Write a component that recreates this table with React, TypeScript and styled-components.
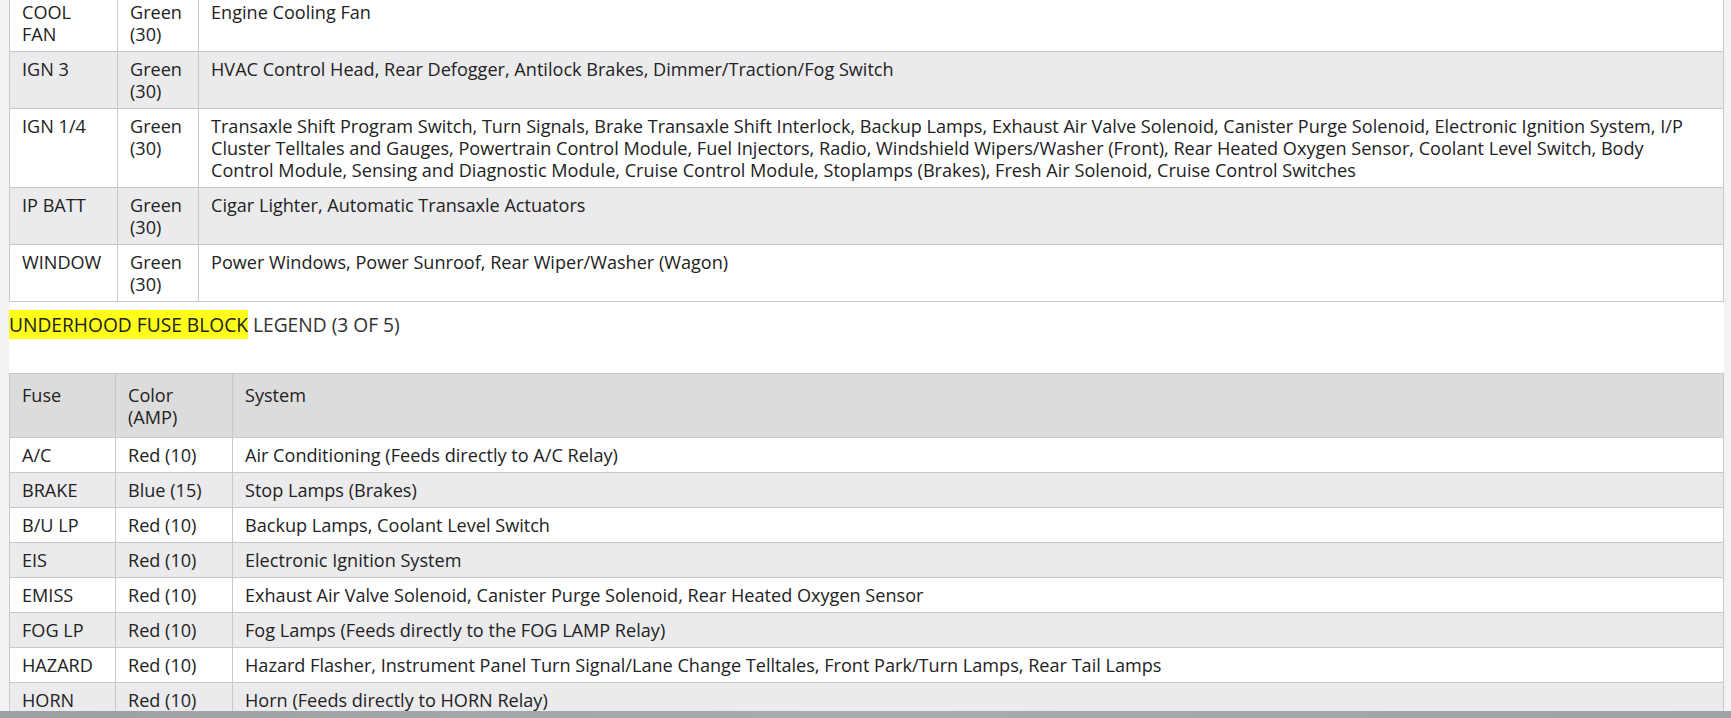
import styled, { createGlobalStyle } from "styled-components";

const GlobalStyle = createGlobalStyle`
  html, body {
    margin: 0;
    padding: 0;
    overflow: hidden;
  }
  body {
    background: #f3f3f5;
    font-family: "Open Sans", "Noto Sans", sans-serif;
    color: #222;
  }
`;

type Row = { fuse: string; color: string; system: string };

const block2: Row[] = [
  { fuse: "COOL FAN", color: "Green (30)", system: "Engine Cooling Fan" },
  {
    fuse: "IGN 3",
    color: "Green (30)",
    system: "HVAC Control Head, Rear Defogger, Antilock Brakes, Dimmer/Traction/Fog Switch",
  },
  {
    fuse: "IGN 1/4",
    color: "Green (30)",
    system:
      "Transaxle Shift Program Switch, Turn Signals, Brake Transaxle Shift Interlock, Backup Lamps, Exhaust Air Valve Solenoid, Canister Purge Solenoid, Electronic Ignition System, I/P Cluster Telltales and Gauges, Powertrain Control Module, Fuel Injectors, Radio, Windshield Wipers/Washer (Front), Rear Heated Oxygen Sensor, Coolant Level Switch, Body Control Module, Sensing and Diagnostic Module, Cruise Control Module, Stoplamps (Brakes), Fresh Air Solenoid, Cruise Control Switches",
  },
  { fuse: "IP BATT", color: "Green (30)", system: "Cigar Lighter, Automatic Transaxle Actuators" },
  {
    fuse: "WINDOW",
    color: "Green (30)",
    system: "Power Windows, Power Sunroof, Rear Wiper/Washer (Wagon)",
  },
];

const block3: Row[] = [
  { fuse: "A/C", color: "Red (10)", system: "Air Conditioning (Feeds directly to A/C Relay)" },
  { fuse: "BRAKE", color: "Blue (15)", system: "Stop Lamps (Brakes)" },
  { fuse: "B/U LP", color: "Red (10)", system: "Backup Lamps, Coolant Level Switch" },
  { fuse: "EIS", color: "Red (10)", system: "Electronic Ignition System" },
  {
    fuse: "EMISS",
    color: "Red (10)",
    system: "Exhaust Air Valve Solenoid, Canister Purge Solenoid, Rear Heated Oxygen Sensor",
  },
  { fuse: "FOG LP", color: "Red (10)", system: "Fog Lamps (Feeds directly to the FOG LAMP Relay)" },
  {
    fuse: "HAZARD",
    color: "Red (10)",
    system:
      "Hazard Flasher, Instrument Panel Turn Signal/Lane Change Telltales, Front Park/Turn Lamps, Rear Tail Lamps",
  },
  { fuse: "HORN", color: "Red (10)", system: "Horn (Feeds directly to HORN Relay)" },
];

const Page = styled.div`
  margin-left: 9px;
  width: 1715px;
  background: #fff;
  min-height: 730px;
`;

const Table = styled.table<{ $scrolled?: boolean }>`
  width: 100%;
  border-collapse: collapse;
  table-layout: fixed;
  font-size: 18.1px;
  line-height: 22px;
  /* page is scrolled a few pixels past the top of this table */
  margin-top: ${(p) => (p.$scrolled ? "-6px" : "0")};
`;

const Col = styled.col<{ $w?: number }>`
  width: ${(p) => (p.$w ? `${p.$w}px` : "auto")};
`;

const HeadCell = styled.th`
  background: #dcdcdc;
  border: 1px solid #c8c8c8;
  padding: 10px 16px 9px 12px;
  text-align: left;
  font-weight: normal;
  vertical-align: top;
`;

const BodyRow = styled.tr<{ $shade: boolean }>`
  background: ${(p) => (p.$shade ? "#ebebed" : "#fff")};
`;

const Cell = styled.td`
  border: 1px solid #c8c8c8;
  padding: 6px 16px 6px 12px;
  vertical-align: top;
`;

const Heading = styled.p`
  margin: 9px 0 34px;
  font-size: 19.2px;
  line-height: 28px;
  color: #333;
`;

const Mark = styled.span`
  background: #ffff1a;
  color: #222;
  padding: 1px 0;
`;

const BottomBar = styled.div`
  position: fixed;
  left: 0;
  right: 0;
  bottom: 0;
  height: 7px;
  background: linear-gradient(90deg, #9aa0a4, #a6acb0 50%, #9ca2a6);
`;

function LegendTable({ rows, widths, header, scrolled }: {
  rows: Row[];
  widths: [number, number];
  header?: boolean;
  scrolled?: boolean;
}) {
  return (
    <Table $scrolled={scrolled}>
      <colgroup>
        <Col $w={widths[0]} />
        <Col $w={widths[1]} />
        <Col />
      </colgroup>
      {header && (
        <thead>
          <tr>
            <HeadCell>Fuse</HeadCell>
            <HeadCell>Color (AMP)</HeadCell>
            <HeadCell>System</HeadCell>
          </tr>
        </thead>
      )}
      <tbody>
        {rows.map((r, i) => (
          <BodyRow key={r.fuse} $shade={i % 2 === 1}>
            <Cell>{r.fuse}</Cell>
            <Cell>{r.color}</Cell>
            <Cell>{r.system}</Cell>
          </BodyRow>
        ))}
      </tbody>
    </Table>
  );
}

export default function App() {
  return (
    <>
      <GlobalStyle />
      <Page>
        <LegendTable rows={block2} widths={[108, 81]} scrolled />
        <Heading>
          <Mark>UNDERHOOD FUSE BLOCK</Mark> LEGEND (3 OF 5)
        </Heading>
        <LegendTable rows={block3} widths={[106, 117]} header />
      </Page>
      <BottomBar />
    </>
  );
}
